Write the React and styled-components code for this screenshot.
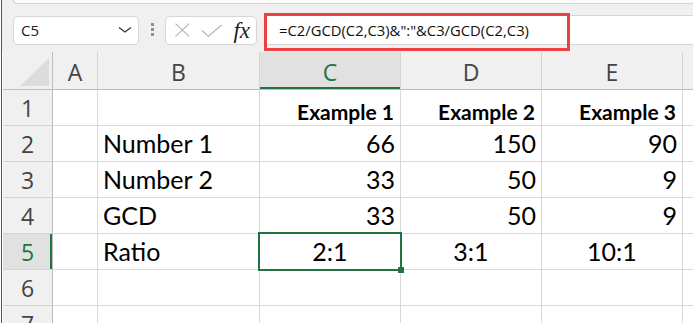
import styled, { createGlobalStyle } from "styled-components";

const GlobalStyle = createGlobalStyle`
  html, body {
    margin: 0;
    padding: 0;
    background: #ffffff;
  }
  body {
    width: 693px;
    height: 323px;
    overflow: hidden;
  }
`;

const GREEN = "#217346";
const GRID = "#d9d9d9";

const Window = styled.div`
  display: flex;
  flex-direction: column;
  height: 323px;
  margin-left: 1px;
  border-left: 1px solid ${GREEN};
  background: #f0f0f0;
  overflow: hidden;
`;

const Toolbar = styled.div`
  display: flex;
  flex-direction: column;
  height: 52px;
  flex-shrink: 0;
`;

const RibbonEdge = styled.div`
  height: 3px;
  margin-left: 11px;
  background: #fbfbfb;
  border-bottom: 1px solid #d3d3d3;
  border-left: 1px solid #d3d3d3;
  border-bottom-left-radius: 6px;
`;

const FormulaRow = styled.div`
  display: flex;
  align-items: center;
  height: 29px;
  margin-top: 11px;
  padding-left: 11px;
`;

const NameBox = styled.div`
  display: flex;
  align-items: center;
  justify-content: space-between;
  box-sizing: border-box;
  width: 126px;
  height: 29px;
  margin-top: 1px;
  padding: 0 6px 0 7px;
  background: #fff;
  border: 1px solid #d6d6d6;
  border-radius: 5px;
  font-family: "Open Sans", sans-serif;
  font-size: 15px;
  color: #1a1a1a;
`;

const Grip = styled.div`
  display: flex;
  flex-direction: column;
  gap: 2px;
  margin: 0 11px 0 12px;
`;

const GripDot = styled.span`
  width: 3px;
  height: 3px;
  background: #8f8f8f;
`;

const FuncBox = styled.div`
  display: flex;
  align-items: center;
  box-sizing: border-box;
  width: 92px;
  height: 29px;
  margin-top: 1px;
  padding: 0 6px 0 8px;
  background: #fff;
  border: 1px solid #d6d6d6;
  border-radius: 5px;
  gap: 10px;
`;

const Fx = styled.span`
  margin-left: 1px;
  font-family: "Liberation Serif", serif;
  font-style: italic;
  font-size: 23px;
  line-height: 1;
  color: #222;
`;

const FormulaInput = styled.div`
  position: relative;
  flex: 1;
  display: flex;
  align-items: center;
  box-sizing: border-box;
  height: 30px;
  margin-left: 7px;
  padding-left: 14px;
  background: #fff;
  border: 1px solid #d6d6d6;
  border-right: none;
  border-radius: 5px 0 0 5px;
  font-family: "Open Sans", sans-serif;
  font-size: 14.8px;
  color: #111;
  white-space: nowrap;
`;

const Highlight = styled.div`
  position: absolute;
  left: -1px;
  top: -3px;
  width: 306px;
  height: 38px;
  box-sizing: border-box;
  border: 3px solid #ea4242;
  z-index: 5;
`;

const SheetWrap = styled.div`
  flex: 1;
  padding-left: 1px;
  background: #fff;
`;

const Sheet = styled.div`
  display: grid;
  grid-template-columns: 50px 45px 162px 141px 141px 141px 1fr;
  grid-template-rows: 38px repeat(7, 36px);
`;

const Corner = styled.div`
  display: flex;
  align-items: flex-end;
  justify-content: flex-end;
  box-sizing: border-box;
  padding: 0 3px 3px 0;
  background: #f0f0f0;
  border-right: 1px solid #bdbdbd;
  border-bottom: 1px solid #bdbdbd;
`;

const CornerTriangle = styled.div`
  width: 29px;
  height: 28px;
  background: #dcdcdc;
  clip-path: polygon(100% 0, 100% 100%, 0 100%);
`;

const ColHeader = styled.div`
  display: flex;
  align-items: center;
  justify-content: center;
  box-sizing: border-box;
  padding-top: 3px;
  background: ${(p) => (p.$selected ? "#e1e1e1" : "#f0f0f0")};
  border-right: 1px solid #d4d4d4;
  border-bottom: 1px solid #bdbdbd;
  box-shadow: ${(p) => (p.$selected ? `inset 0 -2px 0 ${GREEN}` : "none")};
  font-family: "Open Sans", sans-serif;
  font-size: 23px;
  line-height: 1;
  color: ${(p) => (p.$selected ? GREEN : "#444")};
`;

const RowHeader = styled.div`
  display: flex;
  align-items: center;
  justify-content: center;
  box-sizing: border-box;
  padding-top: 2px;
  background: ${(p) => (p.$selected ? "#e1e1e1" : "#f0f0f0")};
  border-right: 1px solid #bdbdbd;
  border-bottom: 1px solid #d4d4d4;
  box-shadow: ${(p) => (p.$selected ? `inset -2px 0 0 ${GREEN}` : "none")};
  font-family: "Open Sans", sans-serif;
  font-size: 23px;
  line-height: 1;
  color: ${(p) => (p.$selected ? GREEN : "#444")};
`;

const Cell = styled.div`
  position: relative;
  display: flex;
  align-items: ${(p) => (p.$bottom ? "flex-end" : "center")};
  justify-content: ${(p) => p.$align};
  box-sizing: border-box;
  padding: ${(p) => (p.$bottom ? "0 6px 3px 5px" : "0 5px")};
  border-right: 1px solid ${GRID};
  border-bottom: 1px solid ${GRID};
  font-family: Lato, "Open Sans", sans-serif;
  font-size: ${(p) => (p.$bold ? "21px" : "25px")};
  font-weight: ${(p) => (p.$bold ? 700 : 400)};
  line-height: 1;
  color: #000;
  white-space: nowrap;

  ${(p) =>
    p.$active &&
    `
    &::after {
      content: "";
      position: absolute;
      left: -2px;
      top: -2px;
      right: -2px;
      bottom: -2px;
      border: 2px solid ${GREEN};
      z-index: 2;
    }
    &::before {
      content: "";
      position: absolute;
      right: -4px;
      bottom: -4px;
      width: 6px;
      height: 6px;
      background: ${GREEN};
      z-index: 3;
    }
  `}
`;

const columns = ["A", "B", "C", "D", "E", ""];

const rows = [
  { n: 1, header: true, b: "", vals: ["Example 1", "Example 2", "Example 3"] },
  { n: 2, b: "Number 1", vals: [66, 150, 90] },
  { n: 3, b: "Number 2", vals: [33, 50, 9] },
  { n: 4, b: "GCD", vals: [33, 50, 9] },
  { n: 5, b: "Ratio", vals: ["2:1", "3:1", "10:1"], center: true },
  { n: 6, b: "", vals: ["", "", ""] },
  { n: 7, b: "", vals: ["", "", ""] },
];

function ChevronIcon() {
  return (
    <svg width="14" height="8" viewBox="0 0 14 8" fill="none">
      <path d="M1 1.5 L7 6 L13 1.5" stroke="#333" strokeWidth="1.2" />
    </svg>
  );
}

function CancelIcon() {
  return (
    <svg width="17" height="14" viewBox="0 0 17 14" fill="none">
      <path d="M1.5 0.5 L15.5 13.5 M15.5 0.5 L1.5 13.5" stroke="#b5b5b5" strokeWidth="1.2" />
    </svg>
  );
}

function EnterIcon() {
  return (
    <svg width="22" height="13" viewBox="0 0 22 13" fill="none">
      <path d="M1 6.5 L7.5 12.2 L21 0.8" stroke="#b5b5b5" strokeWidth="1.2" />
    </svg>
  );
}

export default function App() {
  return (
    <>
      <GlobalStyle />
      <Window>
        <Toolbar>
          <RibbonEdge />
          <FormulaRow>
            <NameBox>
              <span>C5</span>
              <ChevronIcon />
            </NameBox>
            <Grip>
              <GripDot />
              <GripDot />
              <GripDot />
            </Grip>
            <FuncBox>
              <CancelIcon />
              <EnterIcon />
              <Fx>fx</Fx>
            </FuncBox>
            <FormulaInput>
              =C2/GCD(C2,C3)&amp;":"&amp;C3/GCD(C2,C3)
              <Highlight />
            </FormulaInput>
          </FormulaRow>
        </Toolbar>
        <SheetWrap>
          <Sheet>
            <Corner>
              <CornerTriangle />
            </Corner>
            {columns.map((c, i) => (
              <ColHeader key={i} $selected={c === "C"}>
                {c}
              </ColHeader>
            ))}
            {rows.map((r) => (
              <Row key={r.n} row={r} />
            ))}
          </Sheet>
        </SheetWrap>
      </Window>
    </>
  );
}

function Row({ row }) {
  const align = row.header ? "flex-end" : row.center ? "center" : "flex-end";
  return (
    <>
      <RowHeader $selected={row.n === 5}>{row.n}</RowHeader>
      <Cell $align="flex-start" />
      <Cell $align="flex-start">{row.b}</Cell>
      {row.vals.map((v, i) => (
        <Cell
          key={i}
          $align={align}
          $bold={row.header}
          $bottom={row.header}
          $active={row.n === 5 && i === 0}
        >
          {v}
        </Cell>
      ))}
      <Cell $align="flex-start" />
    </>
  );
}
